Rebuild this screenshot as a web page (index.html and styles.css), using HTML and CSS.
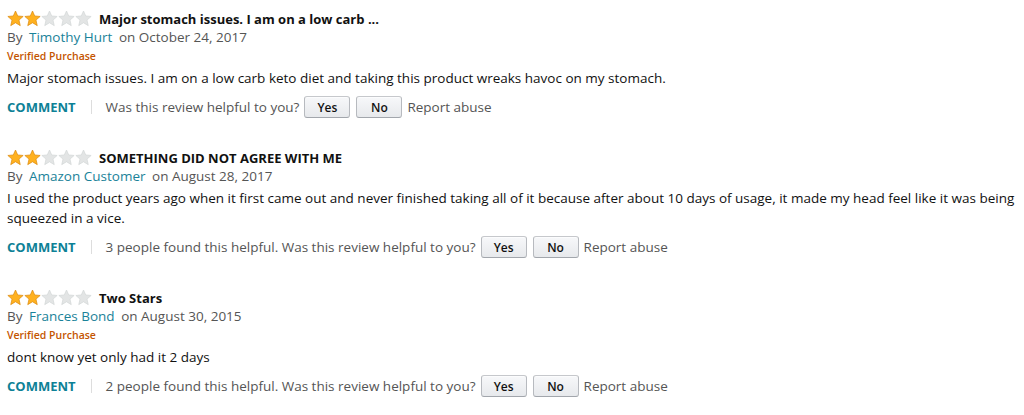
FILE: index.html
```html
<!DOCTYPE html>
<html>
<head>
<meta charset="utf-8">
<link rel="stylesheet" href="styles.css">
</head>
<body>
<svg width="0" height="0" class="defs">
  <defs>
    <symbol id="star" viewBox="0 0 20 20">
      <polygon points="10,1.2 12.6,7 19,7.6 14.1,11.9 15.6,18.4 10,15 4.4,18.4 5.9,11.9 1,7.6 7.4,7"/>
    </symbol>
  </defs>
</svg>
<div class="reviews">
  <div class="review">
    <div class="head">
      <span class="stars">
        <svg class="star on"><use href="#star"/></svg><svg class="star on"><use href="#star"/></svg><svg class="star"><use href="#star"/></svg><svg class="star"><use href="#star"/></svg><svg class="star"><use href="#star"/></svg>
      </span>
      <span class="title">Major stomach issues. I am on a low carb ...</span>
    </div>
    <div class="byline">By <a class="author">Timothy Hurt</a> on October 24, 2017</div>
    <div class="verified">Verified Purchase</div>
    <div class="body">Major stomach issues. I am on a low carb keto diet and taking this product wreaks havoc on my stomach.</div>
    <div class="actions">
      <span class="comment">COMMENT</span>
      <span class="sep"></span>
      <span class="helpful">Was this review helpful to you?</span>
      <button class="btn">Yes</button>
      <button class="btn">No</button>
      <span class="report">Report abuse</span>
    </div>
  </div>
  <div class="review">
    <div class="head">
      <span class="stars">
        <svg class="star on"><use href="#star"/></svg><svg class="star on"><use href="#star"/></svg><svg class="star"><use href="#star"/></svg><svg class="star"><use href="#star"/></svg><svg class="star"><use href="#star"/></svg>
      </span>
      <span class="title">SOMETHING DID NOT AGREE WITH ME</span>
    </div>
    <div class="byline">By <a class="author">Amazon Customer</a> on August 28, 2017</div>
    <div class="body">I used the product years ago when it first came out and never finished taking all of it because after about 10 days of usage, it made my head feel like it was being squeezed in a vice.</div>
    <div class="actions">
      <span class="comment">COMMENT</span>
      <span class="sep"></span>
      <span class="helpful">3 people found this helpful. Was this review helpful to you?</span>
      <button class="btn">Yes</button>
      <button class="btn">No</button>
      <span class="report">Report abuse</span>
    </div>
  </div>
  <div class="review">
    <div class="head">
      <span class="stars">
        <svg class="star on"><use href="#star"/></svg><svg class="star on"><use href="#star"/></svg><svg class="star"><use href="#star"/></svg><svg class="star"><use href="#star"/></svg><svg class="star"><use href="#star"/></svg>
      </span>
      <span class="title">Two Stars</span>
    </div>
    <div class="byline">By <a class="author">Frances Bond</a> on August 30, 2015</div>
    <div class="verified">Verified Purchase</div>
    <div class="body">dont know yet only had it 2 days</div>
    <div class="actions">
      <span class="comment">COMMENT</span>
      <span class="sep"></span>
      <span class="helpful">2 people found this helpful. Was this review helpful to you?</span>
      <button class="btn">Yes</button>
      <button class="btn">No</button>
      <span class="report">Report abuse</span>
    </div>
  </div>
</div>
</body>
</html>
```
FILE: styles.css
```css
html, body {
  margin: 0;
  padding: 0;
  background: #ffffff;
}
body {
  font-family: "Open Sans", "Noto Sans", sans-serif;
  font-size: 13.5px;
  color: #111111;
}
.defs {
  position: absolute;
  width: 0;
  height: 0;
}
.reviews {
  padding: 9px 7px 0 7px;
  display: flex;
  flex-direction: column;
  gap: 29px;
}
.head {
  display: flex;
  align-items: center;
  height: 19px;
}
.stars {
  display: flex;
  width: 85px;
  margin-right: 7px;
}
.star {
  width: 17px;
  height: 17px;
  fill: #e3e5e5;
  stroke: #d2d5d5;
  stroke-width: 0.8;
}
.star.on {
  fill: #ffb11f;
  stroke: #d9860b;
}
.title {
  font-weight: 700;
  font-size: 13px;
  color: #111111;
}
.byline {
  height: 19px;
  line-height: 19px;
  color: #555555;
}
.author {
  color: #1a8299;
  margin: 0 3px;
}
.verified {
  height: 19px;
  line-height: 19px;
  font-size: 10.5px;
  font-weight: 600;
  color: #c45500;
}
.body {
  margin-top: 2px;
  line-height: 20px;
}
.actions {
  margin-top: 7px;
  height: 24px;
  display: flex;
  align-items: center;
}
.comment {
  font-weight: 700;
  font-size: 13px;
  color: #0d8196;
}
.sep {
  width: 1px;
  height: 14px;
  background: #dddddd;
  margin: 0 14px 0 15px;
}
.helpful {
  color: #555555;
}
.btn {
  font-family: inherit;
  font-size: 12px;
  font-weight: 600;
  color: #111111;
  width: 46px;
  height: 22px;
  margin-left: 6px;
  padding: 0;
  border: 1px solid #adb1b8;
  border-color: #c6c8cc #b7babf #a2a6ac;
  border-radius: 3px;
  background: linear-gradient(#f7f8fa, #e7e9ec);
  box-shadow: 0 1px 0 rgba(255,255,255,0.6) inset;
}
.btn:first-of-type {
  margin-left: 5px;
}
.report {
  color: #555555;
  margin-left: 5px;
}
```
